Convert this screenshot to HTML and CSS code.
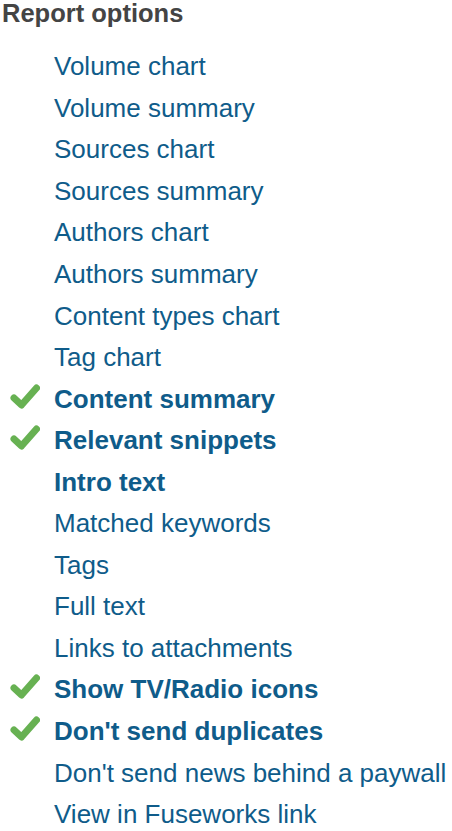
FILE: index.html
```html
<!DOCTYPE html>
<html lang="en">
<head>
  <meta charset="UTF-8">
  <meta name="viewport" content="width=device-width, initial-scale=1.0">
  <title>Report options</title>
  <link rel="stylesheet" href="styles.css">
</head>
<body>

<div id="report-options">
  <div id="title">Report options</div>

  <ul id="option-list">
    <li>Volume chart</li>
    <li>Volume summary</li>
    <li>Sources chart</li>
    <li>Sources summary</li>
    <li>Authors chart</li>
    <li>Authors summary</li>
    <li>Content types chart</li>
    <li>Tag chart</li>
    <li class="checked">Content summary</li>
    <li class="checked">Relevant snippets</li>
    <li class="bold">Intro text</li>
    <li>Matched keywords</li>
    <li>Tags</li>
    <li>Full text</li>
    <li>Links to attachments</li>
    <li class="checked">Show TV/Radio icons</li>
    <li class="checked">Don't send duplicates</li>
    <li>Don't send news behind a paywall</li>
    <li>View in Fuseworks link</li>
  </ul>
</div>

<script>
  // add a green tick in front of every checked option
  const tick = '<svg class="tick" width="32" height="28" viewBox="0 0 32 28">' +
    '<path d="M6 15 L13.5 22 L28.5 5" fill="none" stroke="#67b152" stroke-width="7" stroke-linecap="round" stroke-linejoin="round"/></svg>';

  document.querySelectorAll('#option-list li').forEach(function (item) {
    const slot = document.createElement('span');
    slot.className = 'mark';
    if (item.classList.contains('checked')) slot.innerHTML = tick;
    item.prepend(slot);
  });
</script>

</body>
</html>
```

FILE: styles.css
```css
body {
  font-family: "Liberation Sans", Arial, sans-serif;
  background-color: #ffffff;
  margin: 0;
}

#report-options {
  width: 452px;
}

#title {
  font-size: 25.5px;
  line-height: 26px;
  font-weight: bold;
  color: #444444;
  padding-left: 2px;
  margin-bottom: 20px;
}

#option-list {
  list-style: none;
  margin: 0;
  padding: 0;
}

#option-list li {
  display: flex;
  align-items: center;
  height: 41.56px;
  font-size: 26px;
  color: #0f5c8a;
  white-space: nowrap;
}

#option-list li.checked,
#option-list li.bold {
  font-weight: bold;
}

.mark {
  width: 54px;
  flex-shrink: 0;
  display: flex;
  align-items: center;
}

.tick {
  margin-left: 8px;
  margin-top: -5px;
}
```
